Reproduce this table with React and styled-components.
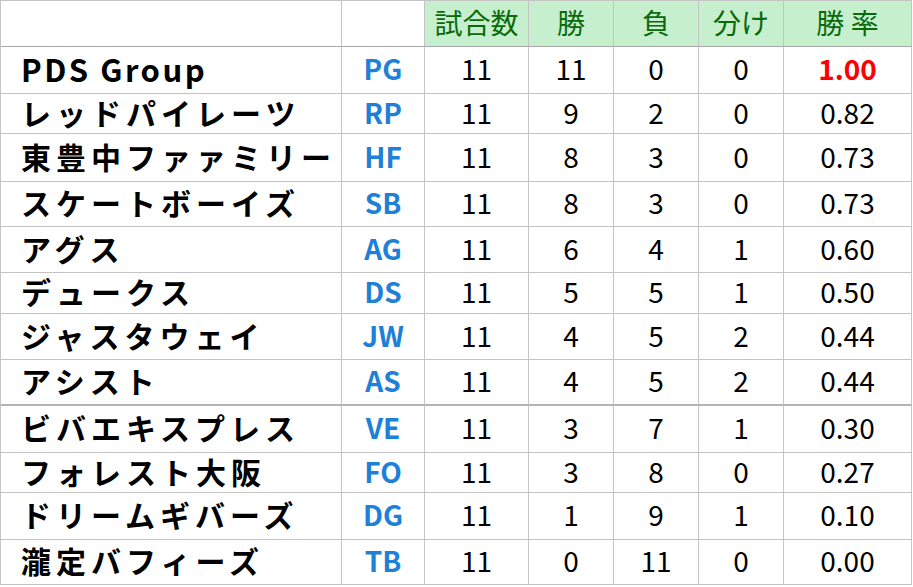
import React from 'react'
import styled, { createGlobalStyle } from 'styled-components'

// Standings sheet: team name, short code, games, wins, losses, draws, win rate.

const GlobalStyle = createGlobalStyle`
  html, body {
    margin: 0;
    padding: 0;
    background: #fff;
  }
  * {
    box-sizing: border-box;
  }
`

const ROW_HEIGHTS = [46, 47, 40, 48, 45, 46, 41, 46, 46, 47, 40, 47, 45]

const TEAMS = [
  { name: 'PDS Group', code: 'PG', games: 11, win: 11, lose: 0, draw: 0, rate: '1.00', top: true, latin: true },
  { name: 'レッドパイレーツ', code: 'RP', games: 11, win: 9, lose: 2, draw: 0, rate: '0.82' },
  { name: '東豊中ファァミリー', code: 'HF', games: 11, win: 8, lose: 3, draw: 0, rate: '0.73' },
  { name: 'スケートボーイズ', code: 'SB', games: 11, win: 8, lose: 3, draw: 0, rate: '0.73' },
  { name: 'アグス', code: 'AG', games: 11, win: 6, lose: 4, draw: 1, rate: '0.60' },
  { name: 'デュークス', code: 'DS', games: 11, win: 5, lose: 5, draw: 1, rate: '0.50' },
  { name: 'ジャスタウェイ', code: 'JW', games: 11, win: 4, lose: 5, draw: 2, rate: '0.44' },
  { name: 'アシスト', code: 'AS', games: 11, win: 4, lose: 5, draw: 2, rate: '0.44', divider: true },
  { name: 'ビバエキスプレス', code: 'VE', games: 11, win: 3, lose: 7, draw: 1, rate: '0.30' },
  { name: 'フォレスト大阪', code: 'FO', games: 11, win: 3, lose: 8, draw: 0, rate: '0.27' },
  { name: 'ドリームギバーズ', code: 'DG', games: 11, win: 1, lose: 9, draw: 1, rate: '0.10' },
  { name: '瀧定バフィーズ', code: 'TB', games: 11, win: 0, lose: 11, draw: 0, rate: '0.00' },
]

const HEADERS = ['試合数', '勝', '負', '分け', '勝 率']

const Sheet = styled.div`
  display: grid;
  grid-template-columns: 341px 83px 104px 85px 85px 85px 128px;
  grid-template-rows: ${ROW_HEIGHTS.map((h) => `${h}px`).join(' ')};
  width: 912px;
  border-top: 1px solid #c4c4c4;
  border-left: 1px solid #c4c4c4;
  font-family: 'Noto Sans CJK JP', 'Noto Sans', sans-serif;
  line-height: 1;
  color: #000;
`

const Cell = styled.div`
  display: flex;
  align-items: center;
  justify-content: center;
  border-right: 1px solid #c4c4c4;
  border-bottom: ${(p) => (p.$divider ? '2px solid #b4b4b4' : '1px solid #c4c4c4')};
  padding-bottom: 4px;
  background: #fff;
`

const BlankHead = styled(Cell)`
  border-bottom-color: #a8a8a8;
`

const HeaderCell = styled(Cell)`
  background: #c6efce;
  color: #0a6a0a;
  font-size: 28px;
  font-weight: 400;
  border-bottom-color: #a8a8a8;
  white-space: pre;
`

const NameCell = styled(Cell)`
  justify-content: flex-start;
  padding-left: 20px;
  font-size: ${(p) => (p.$latin ? '31px' : '30px')};
  font-weight: 700;
  letter-spacing: ${(p) => (p.$latin ? '2.5px' : '5px')};
  white-space: nowrap;
`

const CodeCell = styled(Cell)`
  font-size: 28px;
  font-weight: 700;
  color: #1f80d8;
`

const NumCell = styled(Cell)`
  font-size: 28px;
  font-weight: 400;
`

const RateCell = styled(NumCell)`
  color: ${(p) => (p.$top ? '#ff0000' : '#000')};
  font-weight: ${(p) => (p.$top ? 700 : 400)};
`

export default function App() {
  return (
    <>
      <GlobalStyle />
      <Sheet>
        <BlankHead />
        <BlankHead />
        {HEADERS.map((h) => (
          <HeaderCell key={h}>{h}</HeaderCell>
        ))}
        {TEAMS.map((t) => (
          <React.Fragment key={t.code}>
            <NameCell $divider={t.divider} $latin={t.latin}>{t.name}</NameCell>
            <CodeCell $divider={t.divider}>{t.code}</CodeCell>
            <NumCell $divider={t.divider}>{t.games}</NumCell>
            <NumCell $divider={t.divider}>{t.win}</NumCell>
            <NumCell $divider={t.divider}>{t.lose}</NumCell>
            <NumCell $divider={t.divider}>{t.draw}</NumCell>
            <RateCell $divider={t.divider} $top={t.top}>{t.rate}</RateCell>
          </React.Fragment>
        ))}
      </Sheet>
    </>
  )
}
